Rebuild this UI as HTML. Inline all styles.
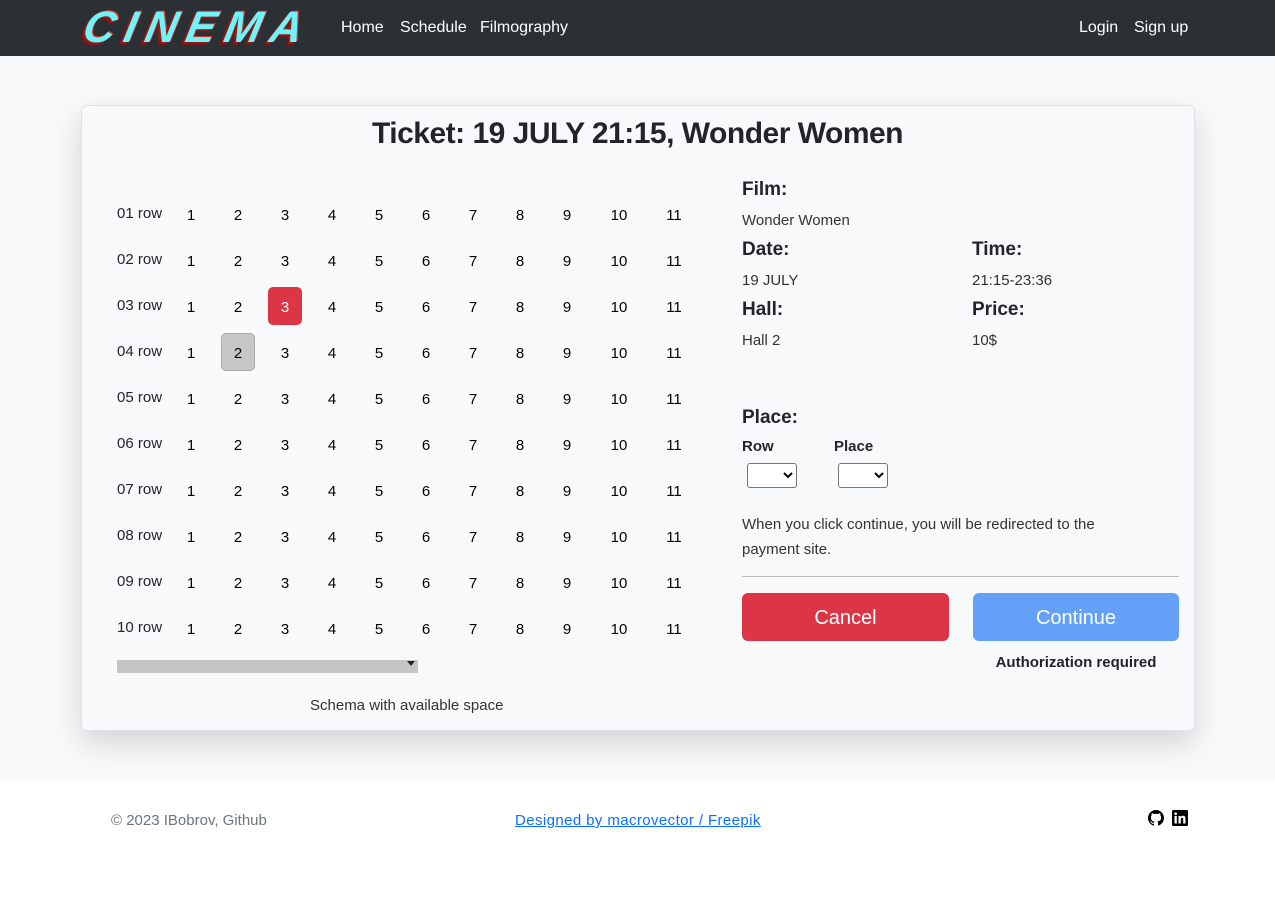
<!DOCTYPE html>
<html><head><meta charset="utf-8"><style>
*{box-sizing:border-box;margin:0;padding:0}
body{width:1275px;height:921px;background:#fff;font-family:"Liberation Sans",sans-serif;color:#212529;position:relative;overflow:hidden}
.nav{position:absolute;left:0;top:0;width:1275px;height:56px;background:#2b3035}
.nav a{position:absolute;top:19px;color:#fff;font-size:16px;text-decoration:none}
.logo{position:absolute;left:84px;top:3px;font:italic 900 44px "Liberation Sans",sans-serif;letter-spacing:9px;color:#6ff5f8;text-shadow:-2px 2px 0 #8a1b1b,-3px 3px 0 #7a1515, 1px -1px 0 #e83333;transform:skewX(-12deg);}
.main{position:absolute;left:0;top:56px;width:1275px;height:724px;background:#f8f9fa}
.card{position:absolute;left:81px;top:105px;width:1114px;height:626px;background:#f8f9fa;border:1px solid #dee2e6;border-radius:6px;box-shadow:0 12px 30px rgba(0,0,0,.15)}
.t{position:absolute;white-space:nowrap}
.n{position:absolute;width:34px;height:38px;line-height:42px;text-align:center;font-size:15px;color:#000}
.lbl{position:absolute;font-size:15px;color:#212529}
h{position:absolute;font-size:19px;font-weight:600}
.v{position:absolute;font-size:15px;color:#333}
select{position:absolute;width:50px;height:25px;border:1px solid #767676;border-radius:3px;background:#fff}
.btn{position:absolute;height:48px;border-radius:6px;color:#fff;font-size:20px;text-align:center;line-height:50px}
</style></head><body>
<div class="nav">
<div class="logo">CINEMA</div>
<a style="left:341px">Home</a><a style="left:400px">Schedule</a><a style="left:480px">Filmography</a>
<a style="left:1079px">Login</a><a style="left:1134px">Sign up</a>
</div>
<div class="main"></div>
<div class="card"></div>
<div class="t" style="left:0;width:1275px;text-align:center;top:117px;font-size:30px;font-weight:600;color:#212529;letter-spacing:-0.5px">Ticket: 19 JULY 21:15, Wonder Women</div>
<div id="grid"></div>
<div class="t" style="left:117px;top:660px;width:301px;height:13px;background:#c4c5c7"></div>
<div class="t" style="left:407px;top:661px;width:0;height:0;border-left:4px solid transparent;border-right:4px solid transparent;border-top:5px solid #222"></div>
<div class="t" style="left:310px;top:697px;font-size:15px;color:#333">Schema with available space</div>

<h style="left:742px;top:179px">Film:</h><div class="v" style="left:742px;top:212px">Wonder Women</div>
<h style="left:742px;top:239px">Date:</h><div class="v" style="left:742px;top:272px">19 JULY</div>
<h style="left:972px;top:239px">Time:</h><div class="v" style="left:972px;top:272px">21:15-23:36</div>
<h style="left:742px;top:299px">Hall:</h><div class="v" style="left:742px;top:332px">Hall 2</div>
<h style="left:972px;top:299px">Price:</h><div class="v" style="left:972px;top:332px">10$</div>
<h style="left:742px;top:407px">Place:</h>
<div class="t" style="left:742px;top:438px;font-size:15px;font-weight:600">Row</div>
<div class="t" style="left:834px;top:438px;font-size:15px;font-weight:600">Place</div>
<select style="left:747px;top:463px"></select><select style="left:838px;top:463px"></select>
<div class="t" style="left:742px;top:512px;font-size:15px;line-height:25px;color:#333;white-space:normal;width:395px">When you click continue, you will be redirected to the payment site.</div>
<div class="t" style="left:742px;top:576px;width:437px;height:1px;background:#bbb"></div>
<div class="btn" style="left:742px;top:593px;width:207px;background:#dc3545">Cancel</div>
<div class="btn" style="left:973px;top:593px;width:206px;background:#64a0f8">Continue</div>
<div class="t" style="left:973px;width:206px;text-align:center;top:654px;font-size:15px;font-weight:700">Authorization required</div>

<div class="t" style="left:111px;top:812px;font-size:15px;color:#6c757d">© 2023 IBobrov, Github</div>
<div class="t" style="left:515px;top:812px;font-size:15px;color:#0d6efd;text-decoration:underline;letter-spacing:0.4px">Designed by macrovector / Freepik</div>
<svg class="t" style="left:1148px;top:810px" width="16" height="16" viewBox="0 0 16 16"><path fill="#000" d="M8 0C3.6 0 0 3.6 0 8c0 3.5 2.3 6.5 5.5 7.6.4.1.5-.2.5-.4v-1.4c-2.2.5-2.7-1-2.7-1-.4-.9-.9-1.2-.9-1.2-.7-.5.1-.5.1-.5.8.1 1.2.8 1.2.8.7 1.2 1.9.9 2.3.7.1-.5.3-.9.5-1.1-1.8-.2-3.6-.9-3.6-4 0-.9.3-1.6.8-2.1-.1-.2-.4-1 .1-2.1 0 0 .7-.2 2.2.8.6-.2 1.3-.3 2-.3s1.4.1 2 .3c1.5-1 2.2-.8 2.2-.8.4 1.1.2 1.9.1 2.1.5.6.8 1.3.8 2.1 0 3.1-1.9 3.7-3.6 3.9.3.3.5.8.5 1.5v2.2c0 .2.1.5.6.4C13.7 14.5 16 11.5 16 8c0-4.4-3.6-8-8-8z"/></svg>
<svg class="t" style="left:1172px;top:810px" width="16" height="16" viewBox="0 0 16 16"><rect width="16" height="16" rx="1.5" fill="#000"/><rect x="2.5" y="6" width="2.3" height="7.5" fill="#fff"/><circle cx="3.65" cy="3.7" r="1.35" fill="#fff"/><path fill="#fff" d="M6.5 6h2.2v1c.4-.7 1.2-1.2 2.3-1.2 2 0 2.5 1.3 2.5 3v4.7h-2.3V9.3c0-1-.2-1.6-1.1-1.6-1 0-1.3.7-1.3 1.6v4.2H6.5z"/></svg>
<script>
var xs=[191,238,285,332,379,426,473,520,567,619,674],h='';
for(var r=0;r<10;r++){var y=214+r*46;
h+='<div class="lbl t" style="left:117px;top:'+(y-9)+'px">'+(r<9?'0'+(r+1):'10')+' row</div>';
for(var i=0;i<11;i++){var s='';
if(r==2&&i==2)s='background:#dc3545;color:#fff;border-radius:5px;';
if(r==3&&i==1)s='background:#c6c7c8;border:1px solid #aaa;border-radius:5px;line-height:40px;';
h+='<div class="n" style="left:'+(xs[i]-17)+'px;top:'+(y-19)+'px;'+s+'">'+(i+1)+'</div>';}}
document.getElementById('grid').innerHTML=h;
</script>
</body></html>
